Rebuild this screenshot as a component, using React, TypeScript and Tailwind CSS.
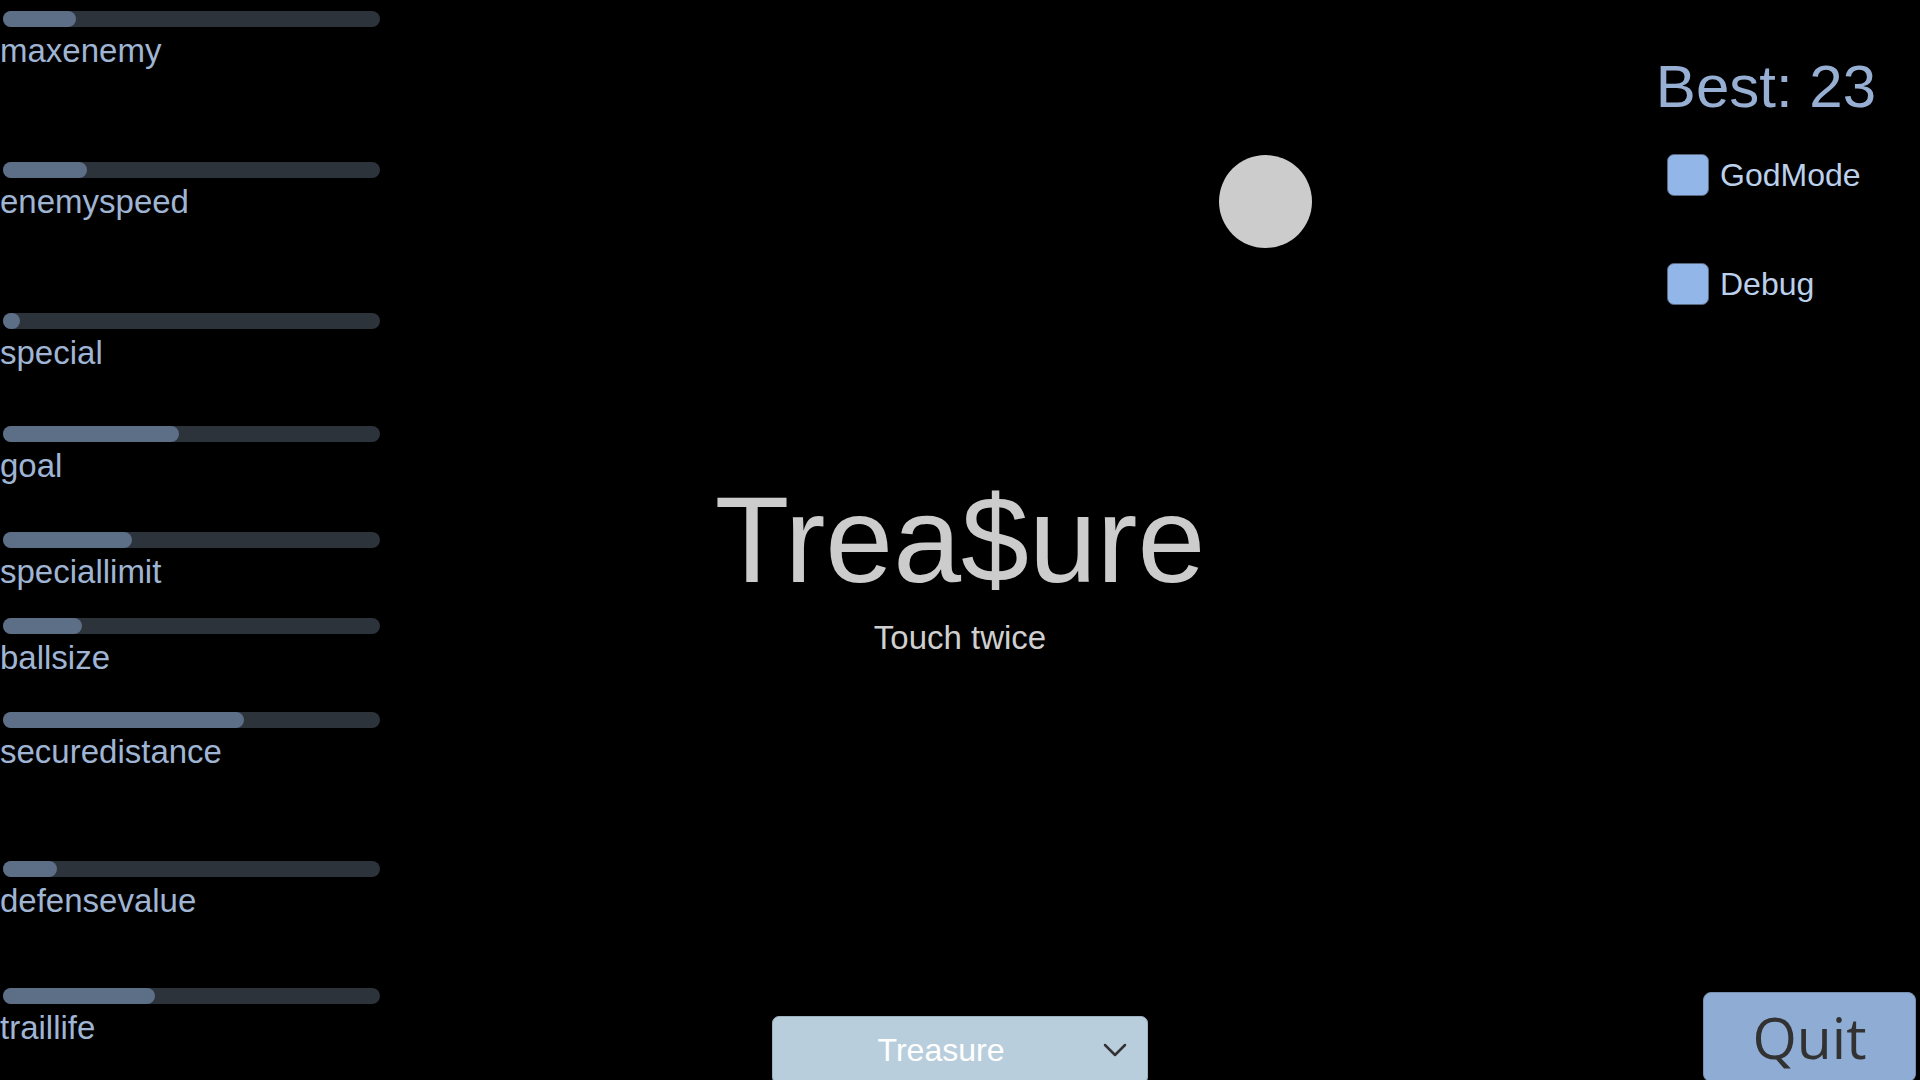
import React from "react";

type SliderItem = { label: string; fill: number; mt: string };

const sliders: SliderItem[] = [
  { label: "maxenemy", fill: 73, mt: "mt-[11px]" },
  { label: "enemyspeed", fill: 84, mt: "mt-[93px]" },
  { label: "special", fill: 17, mt: "mt-[93px]" },
  { label: "goal", fill: 176, mt: "mt-[55px]" },
  { label: "speciallimit", fill: 129, mt: "mt-[48px]" },
  { label: "ballsize", fill: 79, mt: "mt-[28px]" },
  { label: "securedistance", fill: 241, mt: "mt-[36px]" },
  { label: "defensevalue", fill: 54, mt: "mt-[91px]" },
  { label: "traillife", fill: 152, mt: "mt-[69px]" },
];

function Slider({ item }: { item: SliderItem }) {
  return (
    <div className={`flex flex-col ${item.mt}`}>
      <div className="ml-[3px] w-[377px] h-[16px] rounded-full bg-[#2c333b]">
        <div
          className="h-full rounded-full bg-[#5d6e87]"
          style={{ width: `${item.fill}px` }}
        />
      </div>
      <div className="mt-[5px] text-[33px] leading-[37px] text-[#9fb5d3] whitespace-nowrap">
        {item.label}
      </div>
    </div>
  );
}

function Check({ label, mt }: { label: string; mt: string }) {
  return (
    <div className={`flex items-center ml-[127px] ${mt}`}>
      <div className="w-[42px] h-[42px] rounded-[7px] bg-[#92b6e8] border border-[#55687f]" />
      <div className="ml-[11px] text-[32px] leading-[36px] text-[#bcd0ec]">{label}</div>
    </div>
  );
}

export default function App() {
  return (
    <div
      className="relative w-[1920px] h-[1080px] bg-black overflow-hidden flex"
      style={{ fontFamily: '"Liberation Sans", Arial, sans-serif' }}
    >
      {/* Left sliders */}
      <div className="w-[380px] flex flex-col shrink-0">
        {sliders.map((s) => (
          <Slider key={s.label} item={s} />
        ))}
      </div>

      {/* Center */}
      <div className="flex-1 flex flex-col items-center">
        <div className="mt-[479px] text-[122px] leading-[122px] text-[#cccccc]">Trea$ure</div>
        <div className="mt-[19px] text-[33px] leading-[36px] text-[#cfcfcf]">Touch twice</div>
        <div className="mt-auto mb-[-4px] w-[376px] h-[68px] rounded-[7px] bg-[#b9cedc] border border-[#9fb2c0] flex items-center">
          <div className="flex-1 pl-[10px] text-center text-[32px] leading-[36px] text-white">Treasure</div>
          <svg width="24" height="14" viewBox="0 0 24 14" className="ml-[4px] mr-[20px]">
            <polyline
              points="2,2 12,12 22,2"
              fill="none"
              stroke="#333333"
              strokeWidth="2.5"
              strokeLinecap="round"
              strokeLinejoin="round"
            />
          </svg>
        </div>
      </div>

      {/* Right column */}
      <div className="w-[380px] shrink-0 flex flex-col">
        <div className="mt-[57px] pr-[44px] text-right text-[60px] leading-[59px] text-[#97afd2] whitespace-nowrap">
          Best: 23
        </div>
        <Check label="GodMode" mt="mt-[38px]" />
        <Check label="Debug" mt="mt-[67px]" />
        <div
          className="mt-auto mb-[-2px] ml-[163px] w-[213px] h-[90px] rounded-[8px] bg-[#8fadd4] border border-[#7890b0] flex items-center justify-center text-[57px] leading-[64px] text-[#323232]"
          style={{ fontFamily: '"Open Sans", "Noto Sans", sans-serif' }}
        >
          Quit
        </div>
      </div>

      {/* Ball on the play field */}
      <div className="absolute left-[1219px] top-[155px] w-[93px] h-[93px] rounded-full bg-[#cccccc]" />
    </div>
  );
}
